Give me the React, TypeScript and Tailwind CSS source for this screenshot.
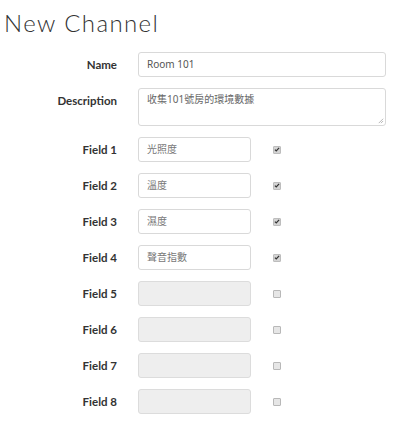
const fields = [
  { label: "Field 1", value: "光照度", on: true },
  { label: "Field 2", value: "溫度", on: true },
  { label: "Field 3", value: "濕度", on: true },
  { label: "Field 4", value: "聲音指數", on: true },
  { label: "Field 5", value: "", on: false },
  { label: "Field 6", value: "", on: false },
  { label: "Field 7", value: "", on: false },
  { label: "Field 8", value: "", on: false },
]

const cjk = "font-['Noto_Sans','Noto_Sans_CJK_TC',sans-serif]"

function Check({ on }: { on: boolean }) {
  return on ? (
    <span className="flex h-[8px] w-[8px] items-center justify-center rounded-[1px] bg-[#d4d4d4] border border-[#bdbdbd]">
      <svg viewBox="0 0 8 8" className="h-[7px] w-[7px]">
        <path d="M1.2 4.2 L3 6 L6.8 1.8" stroke="#333" strokeWidth="1.6" fill="none" />
      </svg>
    </span>
  ) : (
    <span className="block h-[8px] w-[8px] rounded-[1px] bg-[#e6e6e6] border border-[#b8b8b8]" />
  )
}

function App() {
  return (
    <div className="h-[421px] w-[394px] bg-white overflow-hidden">
      <h1 className="pl-[4px] pt-[8px] text-[24px] font-light leading-[30px] text-[#333] font-['Lato',sans-serif] tracking-[1.4px]">
        New Channel
      </h1>

      <div className="mt-[14px] grid grid-cols-[117px_1fr] gap-x-[21px] gap-y-[11px] pr-[8px] font-['Lato','Open_Sans',sans-serif]">
        <label className="text-right text-[11.5px] font-bold text-[#333] leading-[25px]">Name</label>
        <div className="h-[25px] rounded-[3px] border border-[#d9d9d9] px-[8px] text-[10px] leading-[23px] text-[#555] font-['Noto_Sans',sans-serif]">
          Room 101
        </div>

        <label className="text-right text-[11.5px] font-bold text-[#333] leading-[25px]">Description</label>
        <div className={`relative h-[38px] rounded-[3px] border border-[#d9d9d9] px-[8px] pt-[3px] text-[10px] leading-[14px] text-[#666] ${cjk}`}>
          收集101號房的環境數據
          <svg viewBox="0 0 8 8" className="absolute bottom-[1px] right-[1px] h-[7px] w-[7px]">
            <path d="M7 2 L2 7 M7 4.5 L4.5 7" stroke="#999" strokeWidth="0.8" />
          </svg>
        </div>

        {fields.map((f) => (
          <div key={f.label} className="contents">
            <label className="text-right text-[11.5px] font-bold text-[#333] leading-[25px]">{f.label}</label>
            <div className="flex items-center">
              <div
                className={`h-[25px] w-[113px] rounded-[3px] border px-[8px] text-[10px] leading-[23px] text-[#777] ${cjk} ${
                  f.value ? "border-[#d9d9d9] bg-white" : "border-[#dcdcdc] bg-[#eeeeee]"
                }`}
              >
                {f.value}
              </div>
              <span className="ml-[22px]">
                <Check on={f.on} />
              </span>
            </div>
          </div>
        ))}
      </div>
    </div>
  )
}

export default App
